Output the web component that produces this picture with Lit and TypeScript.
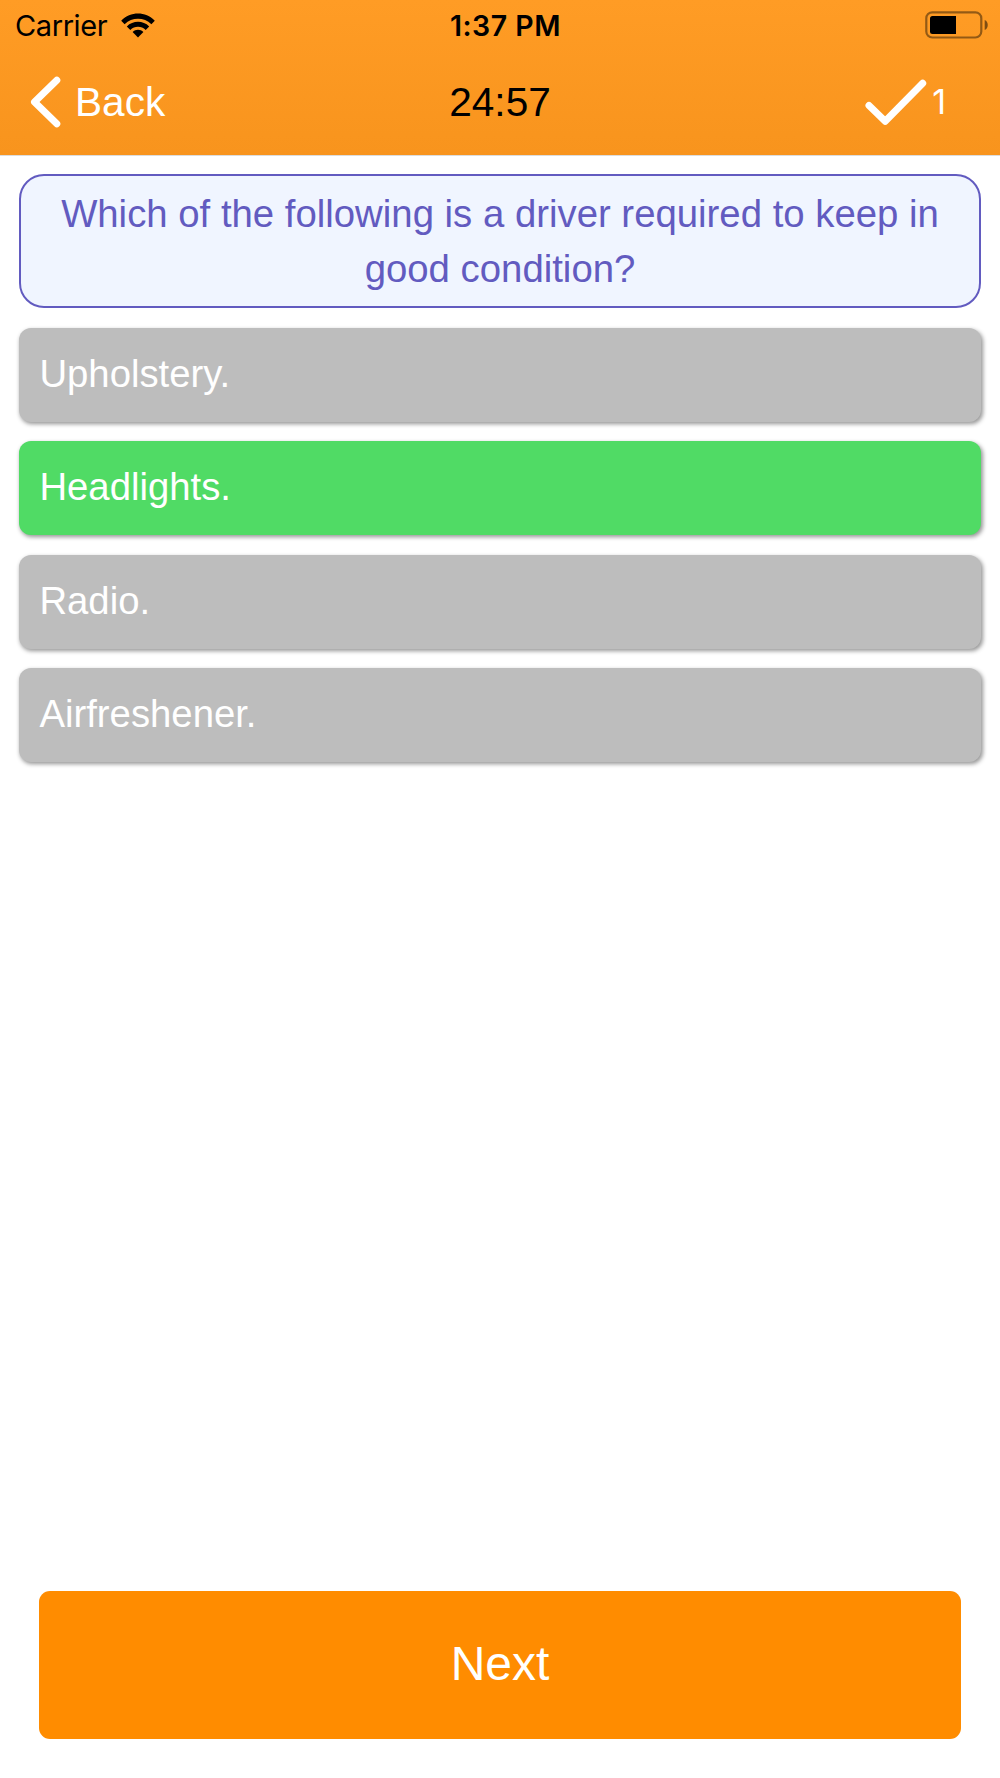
import { LitElement, html, css } from "lit";
import { customElement, property, state } from "lit/decorators.js";
import { classMap } from "lit/directives/class-map.js";

@customElement("status-bar")
class StatusBar extends LitElement {
  static styles = css`
    :host {
      display: grid;
      grid-template-columns: 1fr auto 1fr;
      align-items: center;
      height: 50px;
      padding: 0 12px 0 15px;
      font-family: Inter, "Liberation Sans", sans-serif;
      font-size: 29px;
      line-height: 50px;
      color: #000;
    }
    .left {
      display: flex;
      align-items: center;
      gap: 13px;
      letter-spacing: -0.4px;
      padding-top: 1px;
    }
    .time {
      font-size: 28.5px;
      font-weight: 600;
      letter-spacing: 0.5px;
      padding: 1px 0 0 8px;
    }
    .right {
      display: flex;
      justify-content: flex-end;
    }
    svg {
      display: block;
    }
    .wifi {
      margin-top: -3px;
    }
    .battery {
      margin-top: -1px;
    }
  `;

  render() {
    return html`
      <div class="left">
        <span>Carrier</span>
        <svg class="wifi" width="36" height="26" viewBox="0 0 36 26">
          <path d="M1.2 8.8C10.5-.9 25.5-.9 34.8 8.8L31.4 12.2C24 5 12 5 4.6 12.2Z" />
          <path d="M6.8 14.4C13 8.300 23 8.300 29.200 14.400L25.700 17.900C21.500 13.800 14.500 13.800 10.300 17.900Z" />
          <path d="M12.6 20.100C15.600 17.100 20.400 17.100 23.400 20.100L18 25.500Z" />
        </svg>
      </div>
      <div class="time">1:37 PM</div>
      <div class="right">
        <svg class="battery" width="63" height="28" viewBox="0 0 63 28">
          <rect
            x="1.300"
            y="1.300"
            width="55"
            height="25.200"
            rx="6"
            fill="none"
            stroke="#000"
            stroke-opacity=".42"
            stroke-width="2.200"
          />
          <path d="M7.500 5H31V23H7.500Q5 23 5 20.500V7.500Q5 5 7.500 5Z" />
          <path fill-opacity=".5" d="M59.700 9C63.800 10.500 63.800 17.500 59.700 19Z" />
        </svg>
      </div>
    `;
  }
}

@customElement("nav-bar")
class NavBar extends LitElement {
  @property() remaining = "";
  @property({ type: Number }) correct = 0;

  static styles = css`
    :host {
      display: grid;
      grid-template-columns: 1fr auto 1fr;
      align-items: center;
      height: 105px;
      padding: 0 30px;
      font-size: 40.6px;
      line-height: 48px;
    }
    .back {
      display: flex;
      align-items: center;
      gap: 13px;
      color: #fff;
      padding-bottom: 2px;
    }
    .clock {
      color: #000;
      padding-bottom: 2px;
    }
    .score {
      display: flex;
      justify-content: flex-end;
      align-items: center;
      gap: 5px;
      padding-right: 24px;
      color: #fff;
      font-family: Inter, "Liberation Sans", sans-serif;
      font-size: 34px;
      padding-bottom: 1px;
    }
    svg {
      display: block;
      fill: none;
      stroke: #fff;
      stroke-width: 7;
      stroke-linecap: round;
      stroke-linejoin: round;
    }
  `;

  render() {
    return html`
      <div class="back">
        <svg width="32" height="52" viewBox="0 0 32 52">
          <path d="M26.800 4.200L4.500 26L26.800 47.800" />
        </svg>
        <span>Back</span>
      </div>
      <div class="clock">${this.remaining}</div>
      <div class="score">
        <svg width="62" height="46" viewBox="0 0 62 46">
          <path d="M4 26.500L20.200 42.200L57.700 4.200" />
        </svg>
        <span>${this.correct}</span>
      </div>
    `;
  }
}

@customElement("app-root")
class AppRoot extends LitElement {
  @state() private answers = [
    { text: "Upholstery.", right: false },
    { text: "Headlights.", right: true },
    { text: "Radio.", right: false },
    { text: "Airfreshener.", right: false },
  ];

  static styles = css`
    :host {
      display: flex;
      flex-direction: column;
      box-sizing: border-box;
      width: 100%;
      height: 100vh;
      min-height: 1778px;
      background: #fff;
      font-family: "Liberation Sans", Arial, sans-serif;
    }
    .header {
      background: linear-gradient(#ff9c25, #f8941d);
      border-bottom: 1px solid #dcdcdc;
    }
    .content {
      display: flex;
      flex-direction: column;
      flex: 1;
      padding: 18px 19.4px 0;
    }
    .question {
      box-sizing: border-box;
      height: 134px;
      padding: 10px 20px 0;
      border: 2px solid #625bc0;
      border-radius: 25px;
      background: #f0f5ff;
      color: #625bc0;
      font-size: 38.35px;
      line-height: 55px;
      text-align: center;
    }
    .answers {
      display: flex;
      flex-direction: column;
      gap: 19.4px;
      margin-top: 20px;
    }
    .answer {
      box-sizing: border-box;
      height: 94px;
      padding: 0 20px 3px;
      border-radius: 12px;
      background: #bdbdbd;
      box-shadow: 1.5px 2px 4px rgba(0, 0, 0, 0.42);
      color: #fff;
      font-size: 38.3px;
      line-height: 91px;
    }
    .right {
      background: #50db65;
    }
    .footer {
      padding: 0 39px 39px;
    }
    .next {
      display: block;
      width: 100%;
      height: 148px;
      padding: 0 0 3px;
      border: 0;
      border-radius: 11px;
      background: #ff8c00;
      color: #fff;
      font: 48px "Liberation Sans", Arial, sans-serif;
    }
  `;

  render() {
    return html`
      <div class="header">
        <status-bar></status-bar>
        <nav-bar remaining="24:57" correct="1"></nav-bar>
      </div>
      <div class="content">
        <div class="question">
          Which of the following is a driver required to keep in good condition?
        </div>
        <div class="answers">
          ${this.answers.map(
            (a) => html`<div class=${classMap({ answer: true, right: a.right })}>${a.text}</div>`
          )}
        </div>
      </div>
      <div class="footer"><button class="next">Next</button></div>
    `;
  }
}
